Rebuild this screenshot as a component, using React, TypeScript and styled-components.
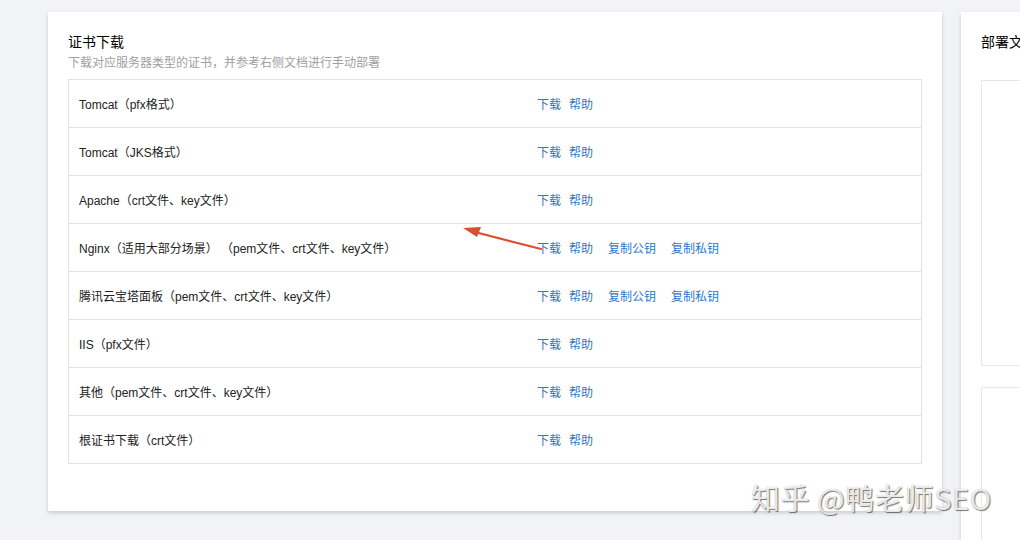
import React from 'react';
import styled, {createGlobalStyle} from 'styled-components';

const GlobalStyle = createGlobalStyle`
	html, body {
		margin: 0;
		padding: 0;
		background: #f2f3f7;
		font-family: "Liberation Sans", "Noto Sans CJK SC", sans-serif;
		color: #333;
	}
`;

const Page = styled.div`
	position: relative;
	width: 1020px;
	height: 540px;
	overflow: hidden;
	display: flex;
	align-items: flex-start;
	gap: 19px;
	padding: 12px 0 0 48px;
	box-sizing: border-box;
`;

const Card = styled.div<{$width: number; $height: number}>`
	flex: none;
	width: ${(p) => p.$width}px;
	height: ${(p) => p.$height}px;
	background: #fff;
	box-shadow: 0 2px 4px rgba(0, 0, 0, 0.16);
	padding: 20px 20px 0 20px;
	box-sizing: border-box;
`;

const Title = styled.div`
	font-size: 14px;
	line-height: 20px;
	color: #000;
`;

const Subtitle = styled.div`
	font-size: 12px;
	line-height: 20px;
	color: #a0a0a0;
	margin-top: 1px;
`;

const Table = styled.div`
	margin-top: 6px;
	border: 1px solid #e1e1e1;
`;

const Row = styled.div`
	display: grid;
	grid-template-columns: 458px 1fr;
	align-items: center;
	height: 47px;
	padding: 0 10px;
	border-top: 1px solid #e1e1e1;
	font-size: 12px;
	&:first-child {
		border-top: none;
	}
`;

const Name = styled.div`
	color: #222;
	white-space: pre;
`;

const Links = styled.div`
	display: flex;
	gap: 15px;
`;

const Link = styled.a<{$tight?: boolean}>`
	color: #2a7ad0;
	text-decoration: none;
	margin-right: ${(p) => (p.$tight ? '-7px' : '0')};
	cursor: pointer;
`;

const SideTitle = styled.div`
	font-size: 14px;
	line-height: 20px;
	color: #000;
	white-space: nowrap;
`;

const DocBox = styled.div<{$height: number}>`
	margin-top: ${(p) => (p.$height > 200 ? 28 : 21)}px;
	height: ${(p) => p.$height}px;
	border: 1px solid #e8e8e8;
	width: 400px;
`;

const Arrow = styled.svg`
	position: absolute;
	left: 455px;
	top: 218px;
	pointer-events: none;
`;

const Watermark = styled.div`
	position: absolute;
	left: 751px;
	top: 478px;
	font-family: "Noto Sans CJK SC", sans-serif;
	font-size: 29px;
	line-height: 38px;
	letter-spacing: 0.6px;
	color: rgba(255, 255, 255, 0.85);
	text-shadow: 1px 1px 1px rgba(0, 0, 0, 0.5), 0 0 1px rgba(0, 0, 0, 0.35);
	white-space: nowrap;
	pointer-events: none;
`;

const ROWS = [
	{name: 'Tomcat（pfx格式）', keys: false},
	{name: 'Tomcat（JKS格式）', keys: false},
	{name: 'Apache（crt文件、key文件）', keys: false},
	{name: 'Nginx（适用大部分场景） （pem文件、crt文件、key文件）', keys: true},
	{name: '腾讯云宝塔面板（pem文件、crt文件、key文件）', keys: true},
	{name: 'IIS（pfx文件）', keys: false},
	{name: '其他（pem文件、crt文件、key文件）', keys: false},
	{name: '根证书下载（crt文件）', keys: false},
];

const App: React.FunctionComponent = (): React.ReactElement => {
	return (
		<>
			<GlobalStyle />
			<Page>
				<Card $width={894} $height={499}>
					<Title>证书下载</Title>
					<Subtitle>下载对应服务器类型的证书，并参考右侧文档进行手动部署</Subtitle>
					<Table>
						{ROWS.map((row, i) => (
							<Row key={i}>
								<Name>{row.name}</Name>
								<Links>
									<Link $tight>下载</Link>
									<Link>帮助</Link>
									{row.keys && <Link>复制公钥</Link>}
									{row.keys && <Link>复制私钥</Link>}
								</Links>
							</Row>
						))}
					</Table>
				</Card>
				<Card $width={440} $height={560}>
					<SideTitle>部署文档</SideTitle>
					<DocBox $height={284} />
					<DocBox $height={200} />
				</Card>
				<Arrow width="90" height="40" viewBox="0 0 90 40">
					<line x1="86" y1="31" x2="16" y2="13" stroke="#d9512c" strokeWidth="2.2" strokeLinecap="round" />
					<polygon points="8,10 26,9 22,19" fill="#d9512c" />
				</Arrow>
				<Watermark>知乎 @鸭老师SEO</Watermark>
			</Page>
		</>
	);
};

export default App;
